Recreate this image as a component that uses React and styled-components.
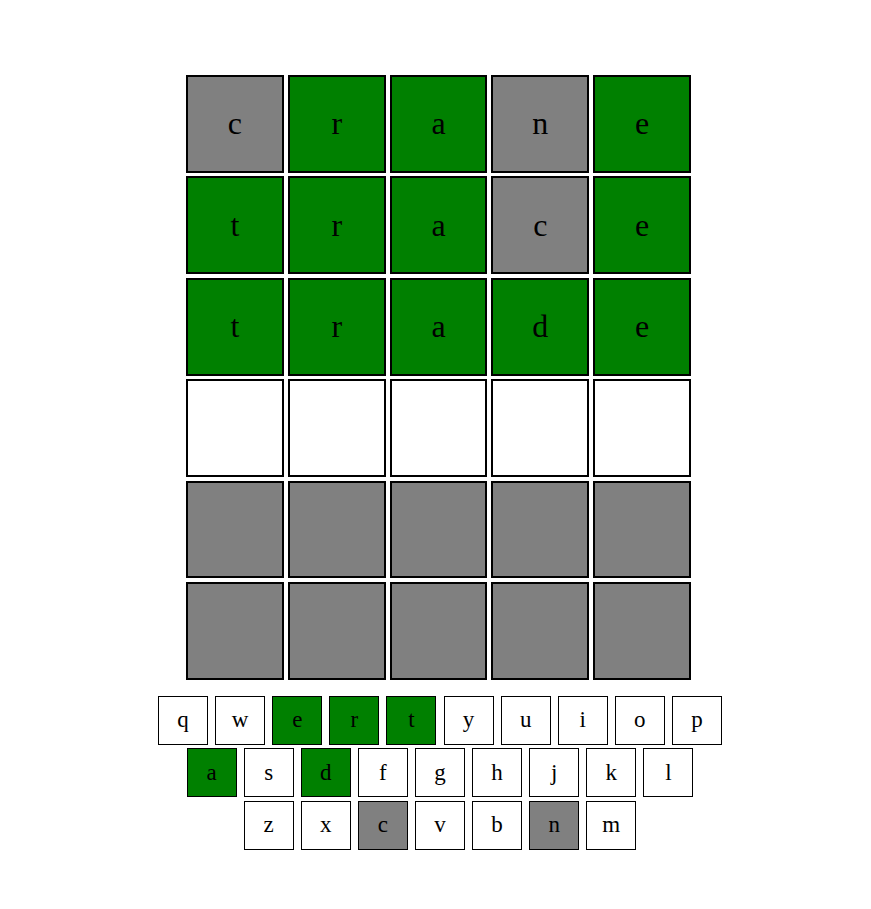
import React from "react";
import styled, { createGlobalStyle } from "styled-components";

const GUESSES = [
  { word: "crane", marks: ["absent", "correct", "correct", "absent", "correct"] },
  { word: "trace", marks: ["correct", "correct", "correct", "absent", "correct"] },
  { word: "trade", marks: ["correct", "correct", "correct", "correct", "correct"] },
  { word: "", marks: ["empty", "empty", "empty", "empty", "empty"] },
  { word: "", marks: ["locked", "locked", "locked", "locked", "locked"] },
  { word: "", marks: ["locked", "locked", "locked", "locked", "locked"] },
];

const KEY_ROWS = ["qwertyuiop", "asdfghjkl", "zxcvbnm"];

const KEY_STATE = {
  e: "correct",
  r: "correct",
  t: "correct",
  a: "correct",
  d: "correct",
  c: "absent",
  n: "absent",
};

const FILL = {
  correct: "#008000",
  absent: "#808080",
  locked: "#808080",
  empty: "#ffffff",
};

export default function App() {
  return (
    <>
      <GlobalStyle />
      <Page>
        <Board>
          {GUESSES.map((row, r) =>
            row.marks.map((mark, c) => (
              <Tile key={`${r}-${c}`} $mark={mark}>
                {row.word[c] || ""}
              </Tile>
            ))
          )}
        </Board>
        <Keyboard>
          {KEY_ROWS.map((row) => (
            <KeyRow key={row}>
              {row.split("").map((ch) => (
                <Key key={ch} $mark={KEY_STATE[ch]}>
                  {ch}
                </Key>
              ))}
            </KeyRow>
          ))}
        </Keyboard>
      </Page>
    </>
  );
}

const GlobalStyle = createGlobalStyle`
  html, body {
    margin: 0;
    padding: 0;
    background: #ffffff;
  }
  body {
    font-family: "Liberation Serif", "Times New Roman", serif;
    color: #000;
  }
`;

const Page = styled.div`
  display: flex;
  flex-direction: column;
  align-items: center;
  padding: 75px 0 40px 9px;
`;

const Board = styled.div`
  display: grid;
  grid-template-columns: repeat(5, 1fr);
  column-gap: 4px;
  row-gap: 3.6px;
  width: 505px;
  margin-right: 3px;
`;

const Tile = styled.div`
  box-sizing: border-box;
  aspect-ratio: 1 / 1;
  border: 2px solid #000;
  background: ${(p) => FILL[p.$mark]};
  display: flex;
  align-items: center;
  justify-content: center;
  font-size: 32px;
`;

const Keyboard = styled.div`
  display: flex;
  flex-direction: column;
  align-items: center;
  gap: 3.5px;
  margin-top: 16px;
`;

const KeyRow = styled.div`
  display: flex;
  gap: 7.1px;
`;

const Key = styled.div`
  box-sizing: border-box;
  width: 50px;
  height: 49px;
  border: 1px solid #000;
  background: ${(p) => (p.$mark ? FILL[p.$mark] : "#ffffff")};
  display: flex;
  align-items: center;
  justify-content: center;
  font-size: 23px;
`;
